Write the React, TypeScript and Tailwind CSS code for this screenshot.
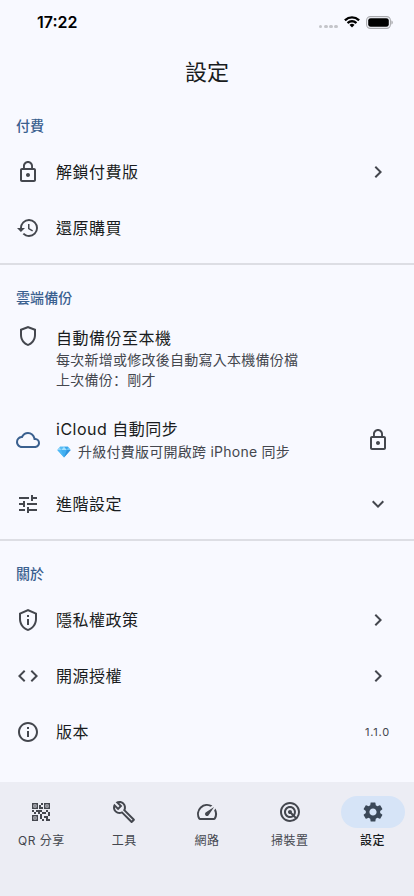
import type { ReactNode } from "react";
import clsx from "clsx";
import {
  MdChevronRight,
  MdCode,
  MdExpandMore,
  MdHistory,
  MdInfoOutline,
  MdLockOutline,
  MdOutlineBuild,
  MdOutlineCloud,
  MdOutlinePrivacyTip,
  MdOutlineShield,
  MdOutlineSpeed,
  MdQrCode2,
  MdRadar,
  MdSettings,
  MdTune
} from "react-icons/md";

function StatusBar() {
  return (
    <div className="flex h-11 items-center justify-between pr-[21px] pl-[37px] text-black">
      <span className="text-[16px] font-semibold">17:22</span>
      <div className="flex items-center">
        <div className="mt-[9px] mr-[6px] flex gap-[1.6px]">
          {[0, 1, 2, 3].map((dot) => (
            <span key={dot} className="size-[3.6px] rounded-full bg-[#c4c5ca]" />
          ))}
        </div>
        <svg viewBox="0 0 17 12" className="mr-[6px] h-[12px] w-[16px]" fill="currentColor">
          <path d="M8.5 2.4c2.4 0 4.7.9 6.4 2.6.1.1.3.1.5 0l1.2-1.3c.2-.1.2-.4 0-.5a11.7 11.7 0 0 0-16.2 0c-.2.1-.2.4 0 .5L1.6 5c.2.1.4.1.5 0A9.3 9.3 0 0 1 8.5 2.4z" />
          <path d="M8.5 6.5c1.3 0 2.6.5 3.6 1.4.1.1.3.1.5 0l1.2-1.3c.2-.1.2-.4 0-.5a7.7 7.7 0 0 0-10.6 0c-.2.1-.2.4 0 .5l1.2 1.3c.2.1.4.1.5 0 1-.9 2.3-1.4 3.6-1.4z" />
          <path d="M11 9.3c.1-.1.1-.4 0-.5a3.9 3.9 0 0 0-5 0c-.1.1-.1.4 0 .5l2.2 2.2c.2.2.4.2.6 0z" />
        </svg>
        <svg viewBox="0 0 27 13" className="h-[13px] w-[27px]">
          <rect x=".6" y=".6" width="23.8" height="11.8" rx="3.8" fill="none" stroke="#a9aaae" strokeWidth="1.1" />
          <rect x="2.2" y="2.2" width="20.6" height="8.6" rx="2.4" fill="#000" />
          <path d="M25.4 4.5v4c.9-.3 1.4-1.1 1.4-2s-.5-1.7-1.4-2z" fill="#a9aaae" />
        </svg>
      </div>
    </div>
  );
}

function Gem() {
  return (
    <svg viewBox="0 0 14 14" className="mr-[7px] ml-px size-[14px] shrink-0">
      <path d="M3 1.8h8L13.6 5 7 12.4.4 5z" fill="#41aef0" />
      <path d="M3 1.8 4.2 5H.4z" fill="#8fd6fb" />
      <path d="M11 1.8 9.8 5h3.8z" fill="#6cc5f7" />
      <path d="M3 1.8h4L4.2 5z" fill="#55bdf6" />
      <path d="M11 1.8H7L9.8 5z" fill="#3aa5ea" />
      <path d="M7 1.8 9.8 5H4.2z" fill="#a4e0fd" />
      <path d="M.4 5h3.8L7 12.4z" fill="#4fb9f5" />
      <path d="M13.6 5H9.8L7 12.4z" fill="#2f93dc" />
    </svg>
  );
}

function SectionTitle({ children }: { children: ReactNode }) {
  return (
    <h2 className="px-4 pt-4 pb-2 text-sm/5 font-medium tracking-[0.1px] text-[#3a608f]">{children}</h2>
  );
}

function Row({ icon, title, trailing }: { icon: ReactNode; title: string; trailing?: ReactNode }) {
  return (
    <div className="flex h-14 items-center gap-4 pr-6 pl-4 text-2xl text-[#44474e]">
      {icon}
      <span className="flex-1 text-base tracking-[0.5px] text-[#191c20]">{title}</span>
      {trailing}
    </div>
  );
}

function Divider() {
  return (
    <div className="flex h-4 items-center">
      <div className="h-[2px] w-full bg-[#dddee4]" />
    </div>
  );
}

const tabs = [
  { label: "QR 分享", icon: <MdQrCode2 /> },
  { label: "工具", icon: <MdOutlineBuild /> },
  { label: "網路", icon: <MdOutlineSpeed /> },
  { label: "掃裝置", icon: <MdRadar /> },
  { label: "設定", icon: <MdSettings />, active: true }
];

export default function App() {
  return (
    <div className="flex h-[896px] w-[414px] flex-col bg-[#f8f9ff] font-['Inter','Noto_Sans_CJK_TC',sans-serif] text-[#191c20]">
      <StatusBar />
      <h1 className="h-14 text-center text-[22px]/[57px] font-normal">設定</h1>

      <main className="flex-1">
        <SectionTitle>付費</SectionTitle>
        <Row icon={<MdLockOutline />} title="解鎖付費版" trailing={<MdChevronRight />} />
        <Row icon={<MdHistory />} title="還原購買" />
        <Divider />

        <SectionTitle>雲端備份</SectionTitle>
        <div className="flex h-[88px] gap-4 px-4 pt-2">
          <MdOutlineShield className="text-2xl text-[#44474e]" />
          <div className="pt-0.5">
            <div className="text-base/6 tracking-[0.5px]">自動備份至本機</div>
            <div className="text-sm/5 tracking-[0.25px] text-[#44474e]">
              <div>每次新增或修改後自動寫入本機備份檔</div>
              <div className="h-5">
                上次備份
                <span className="font-['Noto_Sans_CJK_SC',sans-serif] leading-none" lang="zh-CN">：</span>
                剛才
              </div>
            </div>
          </div>
        </div>
        <div className="flex h-[72px] items-center gap-4 pr-6 pl-4 text-2xl text-[#44474e]">
          <MdOutlineCloud className="text-[#3a608f]" />
          <div className="flex-1">
            <div className="pb-px text-base/[23px] tracking-[0.5px] text-[#191c20]">iCloud 自動同步</div>
            <div className="flex items-center text-sm/5 tracking-[0.25px]">
              <Gem />
              升級付費版可開啟跨 iPhone 同步
            </div>
          </div>
          <MdLockOutline />
        </div>
        <Row icon={<MdTune />} title="進階設定" trailing={<MdExpandMore />} />
        <Divider />

        <SectionTitle>關於</SectionTitle>
        <Row icon={<MdOutlinePrivacyTip />} title="隱私權政策" trailing={<MdChevronRight />} />
        <Row icon={<MdCode />} title="開源授權" trailing={<MdChevronRight />} />
        <Row
          icon={<MdInfoOutline />}
          title="版本"
          trailing={<span className="text-[11px] tracking-[0.8px]">1.1.0</span>}
        />
      </main>

      <nav className="grid h-[114px] grid-cols-5 bg-[#ecedf4] pt-3.5">
        {tabs.map((tab) => (
          <div key={tab.label} className="flex flex-col items-center gap-[5px]">
            <div
              className={clsx(
                "flex h-8 w-16 items-center justify-center rounded-full text-2xl",
                tab.active ? "bg-[#d6e4f7] text-[#3b4858]" : "text-[#44474e]"
              )}
            >
              {tab.icon}
            </div>
            <span
              className={clsx(
                "text-xs/4 tracking-[0.5px]",
                tab.active ? "font-medium text-[#191c20]" : "text-[#44474e]"
              )}
            >
              {tab.label}
            </span>
          </div>
        ))}
      </nav>
    </div>
  );
}
